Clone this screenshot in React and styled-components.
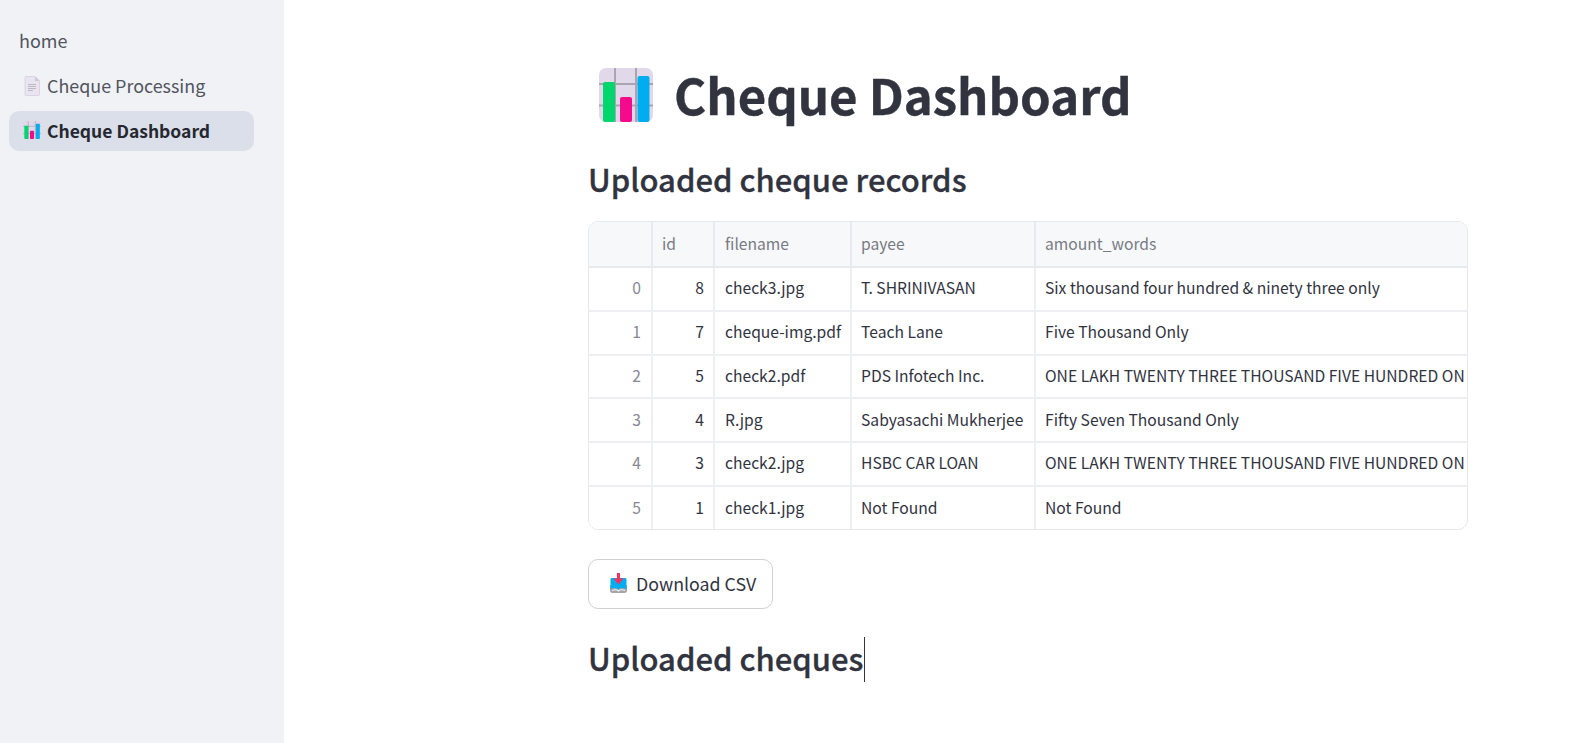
import React from "react";
import styled, { createGlobalStyle } from "styled-components";

const Global = createGlobalStyle`
  html, body { margin: 0; padding: 0; height: 100%; background: #fff; overflow: hidden; }
  body { font-family: "Noto Sans CJK SC", "Noto Sans", sans-serif; color: #31333f; }
  #root { height: 100%; }
`;
const Page = styled.div`display: flex; height: 743px; width: 1577px;`;
const Sidebar = styled.aside`
  width: 284px; flex: none; background: #f0f2f6; box-sizing: border-box; padding: 26px 30px 0 9px;
  display: flex; flex-direction: column;
`;
const Home = styled.div`
  font-size: 18px; line-height: 28px; color: #52545e; padding-left: 10px; margin-bottom: 10px; height: 30px;
`;
const NavItem = styled.div`
  height: 40px; margin-bottom: 5px; border-radius: 10px; display: flex; align-items: center; gap: 6px;
  padding-left: 14px; font-size: ${p => (p.$active ? "17.5px" : "17.9px")}; width: 245px; box-sizing: border-box;
  background: ${p => (p.$active ? "#dadfe9" : "transparent")};
  color: ${p => (p.$active ? "#262730" : "#52545f")};
  font-weight: ${p => (p.$active ? 600 : 400)};
`;
const NavLabel = styled.span`line-height: ${p => (p.$active ? 30 : 28)}px; height: 30px;`;
const IconSlot = styled.span`display: flex; flex: none; margin-top: ${p => p.$top || 0}px;`;
const Main = styled.main`flex: 1; min-width: 0; padding: 55px 0 0 304px; box-sizing: border-box;`;
const Content = styled.div`width: 880px;`;
const Title = styled.h1`
  margin: 0; display: flex; align-items: center; gap: 21px; padding-left: 11px; height: 78px;
  font-size: 49.1px; line-height: 78px; font-weight: 700; color: #31333f; -webkit-text-stroke: 0.4px #31333f;
`;
const Subhead = styled.h2`
  margin: 22px 0 0; font-size: 31px; line-height: 48px; height: 50px; font-weight: 500; color: #31333f;
  -webkit-text-stroke: 0.3px #31333f;
`;
const TableWrap = styled.div`
  margin-top: 16px; width: 880px; height: 309px; box-sizing: border-box; border: 1px solid #e6e8ec;
  border-radius: 10px; overflow: hidden;
`;
const Table = styled.table`
  border-collapse: collapse; table-layout: fixed; width: 878px; font-size: 15.65px;
`;
const HeadCell = styled.th`
  height: 45px; padding: 0 9px 1px; box-sizing: border-box; background: #f7f8fa; font-weight: 400; text-align: left;
  color: #787b84; border-right: 2px solid #e9eaed; border-bottom: 2px solid #e9eaed; white-space: nowrap;
  &:nth-child(3) { padding-left: 10px; }
  &:last-child { border-right: 0; }
`;
const Cell = styled.td`
  height: 43.75px; padding: 0 9px 2px; box-sizing: border-box; color: #31333f; overflow: hidden; white-space: nowrap;
  border-right: 2px solid #eeeff2; border-bottom: 2px solid #eeeff2;
  text-align: ${p => (p.$num ? "right" : "left")};
  &:nth-child(3) { padding-left: 10px; }
  &:last-child { border-right: 0; padding-right: 3px; }
  tr:last-child & { border-bottom: 0; }
`;
const IndexCell = styled(Cell)`color: #868892; background: #fff; padding-right: 10px;`;
const ClipText = styled.span`display: block; overflow: hidden;`;
const DownloadButton = styled.button`
  margin-top: 29px; display: flex; align-items: center; gap: 9px; width: 185px; height: 50px; box-sizing: border-box;
  border: 1px solid #d0d1d5; border-radius: 10px; background: #fff; padding: 0 0 2px 21px;
  font-family: inherit; font-size: 17.8px; color: #31333f;
`;
const LastHead = styled(Subhead)`margin-top: 25px; display: flex; align-items: flex-start;`;
const Caret = styled.span`display: block; width: 1px; height: 45px; background: #31333f; margin-top: 3px;`;

const Chart = ({ size }) => (
  <svg width={size} height={size} viewBox="0 0 54 54">
    <rect width="54" height="54" rx="7" fill="#e1d9ea" />
    <path d="M0 16h54M0 37.500h54M16 0v54M37 0v54" stroke="#a9a5b1" strokeWidth="2" />
    <rect x="4" y="14" width="12" height="40" rx="2" fill="#00d66e" />
    <rect x="21" y="29" width="12" height="25" rx="2" fill="#f50a8e" />
    <rect x="38.500" y="8" width="12" height="46" rx="2" fill="#00adf0" />
  </svg>
);
const Doc = () => (
  <svg width="16" height="20" viewBox="0 0 16 20" style={{ flex: "none", marginLeft: 1, marginRight: 1 }}>
    <path d="M1 1.500C1 .9 1.500.5 2 .5h9l4.500 4.500v13.500c0 .6-.4 1-1 1H2c-.6 0-1-.4-1-1z" fill="#e9e5ef" stroke="#d6cee2" strokeWidth=".8" />
    <path d="M11 .5v4.500h4.500z" fill="#cfc5da" />
    <path d="M4 8.500h8M4 10.500h8M4 12.500h8M4 14.500h5" stroke="#bdb9c4" strokeWidth="1.100" />
  </svg>
);
const Inbox = () => (
  <svg width="17" height="20" viewBox="0 0 17 20" style={{ flex: "none" }}>
    <path d="M0 12v5.500C0 19 1 20 2.500 20h12c1.500 0 2.500-1 2.500-2.500V12z" fill="#a5a5a8" />
    <path d="M.5 6.500c0-1 .7-1.500 1.500-1.500h13c.8 0 1.500.5 1.500 1.500V16c-3-1.500-6-1.500-8 .5-2-2-5-2-8-.5z" fill="#00adf0" />
    <path d="M2 17.500c2.500-1 5-1 6.500.5 1.500-1.500 4-1.500 6.500-.5" stroke="#e8f4fb" strokeWidth="1.200" fill="none" />
    <path d="M7 0h3v5.500h3.500l-5 6-5-6H7z" fill="#f5325e" />
  </svg>
);

const rows = [
  ["0", "8", "check3.jpg", "T. SHRINIVASAN", "Six thousand four hundred & ninety three only"],
  ["1", "7", "cheque-img.pdf", "Teach Lane", "Five Thousand Only"],
  ["2", "5", "check2.pdf", "PDS Infotech Inc.", "ONE LAKH TWENTY THREE THOUSAND FIVE HUNDRED ONLY"],
  ["3", "4", "R.jpg", "Sabyasachi Mukherjee", "Fifty Seven Thousand Only"],
  ["4", "3", "check2.jpg", "HSBC CAR LOAN", "ONE LAKH TWENTY THREE THOUSAND FIVE HUNDRED ONLY"],
  ["5", "1", "check1.jpg", "Not Found", "Not Found"],
];

export default function App() {
  return (
    <Page>
      <Global />
      <Sidebar>
        <Home>home</Home>
        <NavItem><Doc /><NavLabel>Cheque Processing</NavLabel></NavItem>
        <NavItem $active><IconSlot $top={-2}><Chart size={18} /></IconSlot><NavLabel $active>Cheque Dashboard</NavLabel></NavItem>
      </Sidebar>
      <Main>
        <Content>
          <Title><IconSlot $top={2}><Chart size={54} /></IconSlot>Cheque Dashboard</Title>
          <Subhead>Uploaded cheque records</Subhead>
          <TableWrap>
            <Table>
              <colgroup>
                <col style={{ width: 63 }} />
                <col style={{ width: 62 }} />
                <col style={{ width: 137 }} />
                <col style={{ width: 184 }} />
                <col />
              </colgroup>
              <thead>
                <tr>
                  <HeadCell />
                  <HeadCell>id</HeadCell>
                  <HeadCell>filename</HeadCell>
                  <HeadCell>payee</HeadCell>
                  <HeadCell>amount_words</HeadCell>
                </tr>
              </thead>
              <tbody>
                {rows.map(r => (
                  <tr key={r[0]}>
                    <IndexCell $num>{r[0]}</IndexCell>
                    <Cell $num>{r[1]}</Cell>
                    <Cell>{r[2]}</Cell>
                    <Cell>{r[3]}</Cell>
                    <Cell><ClipText>{r[4]}</ClipText></Cell>
                  </tr>
                ))}
              </tbody>
            </Table>
          </TableWrap>
          <DownloadButton><Inbox />Download CSV</DownloadButton>
          <LastHead>Uploaded cheques<Caret /></LastHead>
        </Content>
      </Main>
    </Page>
  );
}
